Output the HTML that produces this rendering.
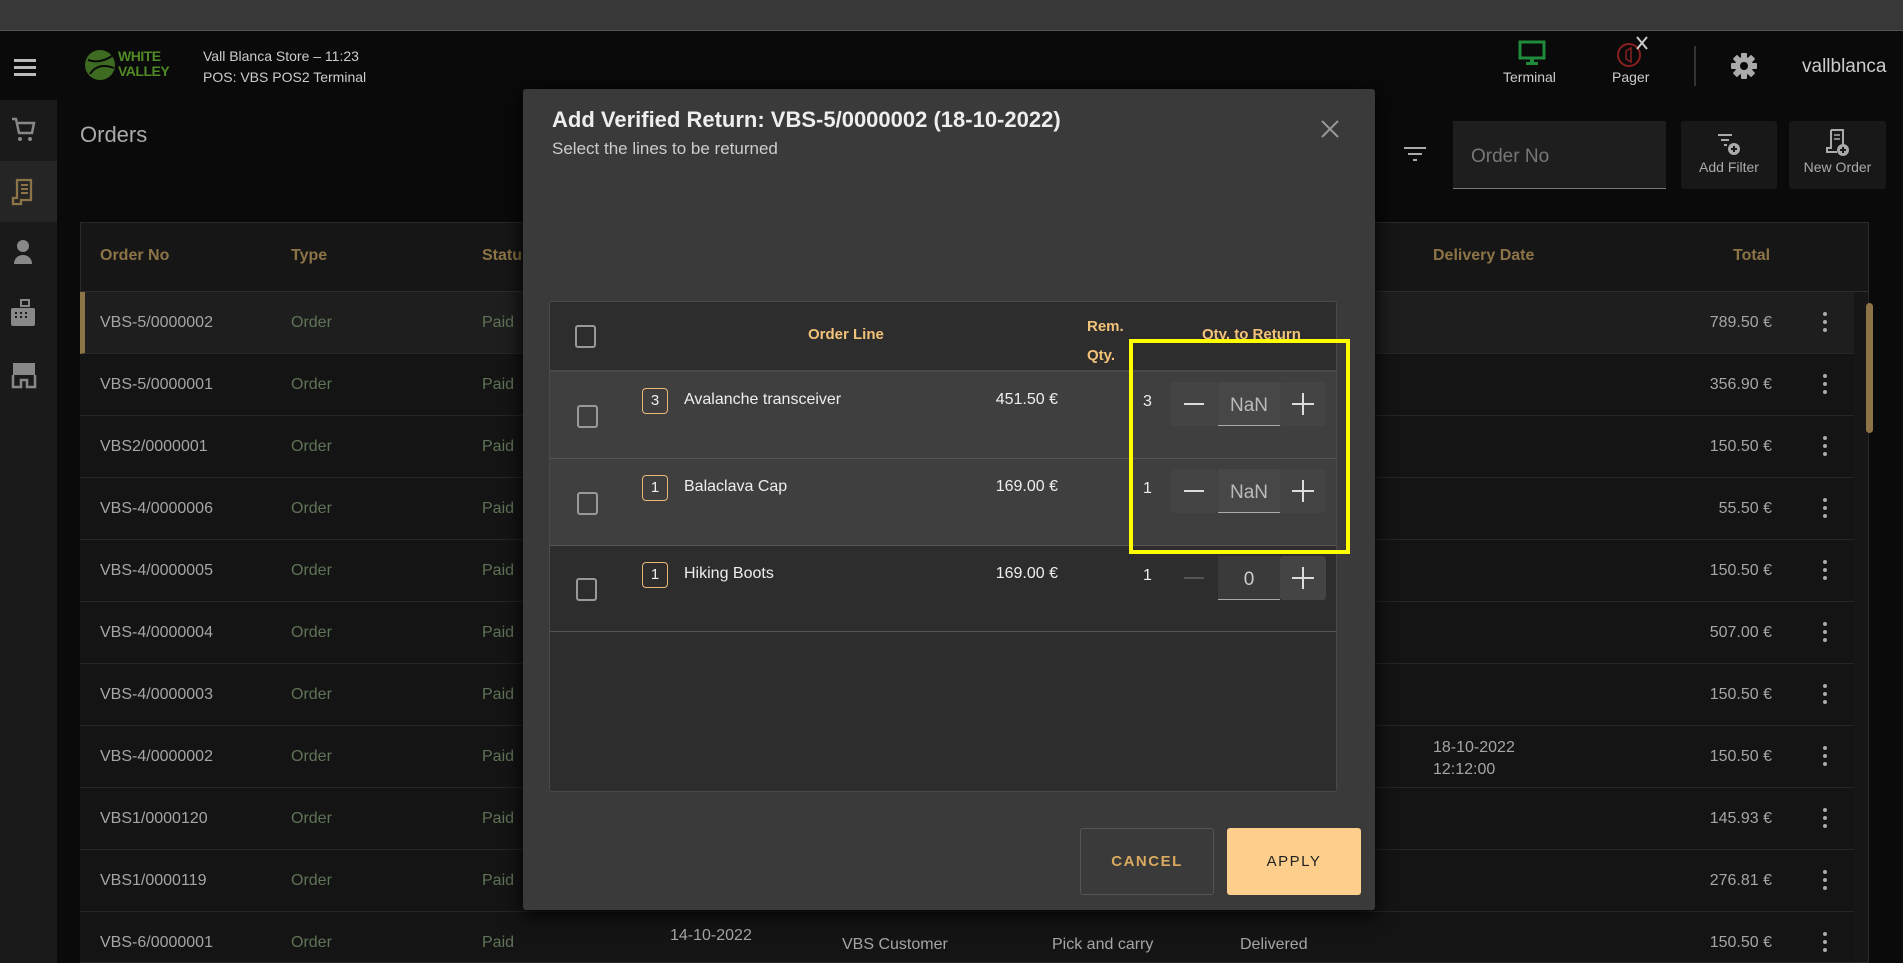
<!DOCTYPE html>
<html><head><meta charset="utf-8"><style>
*{box-sizing:border-box;margin:0;padding:0}
body{width:1903px;height:963px;overflow:hidden;background:#0a0a0a;font-family:"Liberation Sans",sans-serif;position:relative;color:#ccc}
.a{position:absolute}
.top{left:0;top:0;width:1903px;height:31px;background:#383838;border-bottom:1px solid #555}
.side{left:0;top:100px;width:57px;height:863px;background:#1a1a1a}
.hd{color:#8c7447;font-weight:bold;font-size:16px}
.row{left:80px;width:1774px;height:62px;border-bottom:1px solid #262626;background:#141414}
.c{position:absolute;top:22px;font-size:16px}
.no{left:20px;color:#a5a5a5}.ty{left:211px;color:#5f7357}.st{left:402px;color:#5f7357}
.tot{right:82px;color:#a5a5a5;text-align:right;width:120px}
.dots{left:1743px;top:20px;width:4px}
.dots i{display:block;width:4px;height:4px;border-radius:2px;background:#aaa;margin-bottom:4px}
.modal{left:523px;top:89px;width:852px;height:821px;background:#3a3a3a;border-radius:3px;box-shadow:0 4px 20px #000}
.cb{position:absolute;width:21px;height:23px;border:2px solid #999;border-radius:3px}
.mr{position:absolute;left:0;width:786px;border-bottom:1px solid #555}
.badge{position:absolute;left:92px;width:26px;height:26px;border:1.5px solid #e8b877;border-radius:4px;color:#eee;font-size:15px;text-align:center;line-height:23px}
.nm{position:absolute;left:134px;font-size:16px;color:#eee}
.pr{position:absolute;right:278px;font-size:16px;color:#eee}
.rq{position:absolute;left:593px;font-size:16px;color:#eee}
.bt{position:absolute;width:46px;height:44px;background:#444;border-radius:3px}
.inp{position:absolute;left:668px;width:62px;height:44px;background:#4a4a4a;border-bottom:1px solid #aaa;color:#bbb;font-size:19px;text-align:center;line-height:48px}
</style></head><body>
<div class="a top"></div>
<div class="a" style="left:14px;top:59px;width:22px">
<div style="height:3px;background:#bbb;margin-bottom:4px"></div><div style="height:3px;background:#bbb;margin-bottom:4px"></div><div style="height:3px;background:#bbb"></div></div>
<svg class="a" style="left:84px;top:48px" width="32" height="34" viewBox="0 0 32 34"><circle cx="16" cy="17" r="15" fill="#3d6b22"/><path d="M4 12 Q16 16 28 8 M6 26 Q14 14 30 20" stroke="#0a0a0a" stroke-width="2" fill="none"/></svg>
<div class="a" style="left:118px;top:49px;color:#4f8a26;font-weight:bold;font-size:14px;line-height:15px;letter-spacing:-0.5px">WHITE<br>VALLEY</div>
<div class="a" style="left:203px;top:46px;font-size:14px;color:#ccc;line-height:21px">Vall Blanca Store – 11:23<br>POS: VBS POS2 Terminal</div>
<svg class="a" style="left:1518px;top:40px" width="28" height="26" viewBox="0 0 28 26"><rect x="2" y="2" width="24" height="16" fill="none" stroke="#1e8a3a" stroke-width="3"/><rect x="12" y="18" width="4" height="4" fill="#1e8a3a"/><rect x="8" y="22" width="12" height="3" fill="#1e8a3a"/></svg>
<div class="a" style="left:1503px;top:69px;font-size:14px;color:#ccc">Terminal</div>
<svg class="a" style="left:1615px;top:35px" width="36" height="32" viewBox="0 0 36 32"><circle cx="14" cy="20" r="11" fill="none" stroke="#8a1f1f" stroke-width="2"/><path d="M11 16l5-3v14l-5-3z" fill="none" stroke="#8a1f1f" stroke-width="1.5"/><path d="M22 2l10 12M32 2L22 14" stroke="#ccc" stroke-width="2"/></svg>
<div class="a" style="left:1612px;top:69px;font-size:14px;color:#ccc">Pager</div>
<div class="a" style="left:1694px;top:46px;width:2px;height:40px;background:#333"></div>
<svg class="a" style="left:1731px;top:53px" width="26" height="26" viewBox="0 0 26 26"><g fill="#aaa"><rect x="10" y="0" width="6" height="26" rx="1"/><rect x="10" y="0" width="6" height="26" rx="1" transform="rotate(45 13 13)"/><rect x="10" y="0" width="6" height="26" rx="1" transform="rotate(90 13 13)"/><rect x="10" y="0" width="6" height="26" rx="1" transform="rotate(135 13 13)"/><circle cx="13" cy="13" r="9"/></g><circle cx="13" cy="13" r="4" fill="#0a0a0a"/></svg>
<div class="a" style="left:1802px;top:56px;font-size:19px;color:#ccc">vallblanca</div>
<div class="a side"></div>
<div class="a" style="left:0;top:161px;width:57px;height:61px;background:#252525"></div>
<svg class="a" style="left:10px;top:116px" width="26" height="28" viewBox="0 0 26 28"><path d="M2 3h4l3 14h13l2-10H8" fill="none" stroke="#888" stroke-width="2.5"/><circle cx="10" cy="23" r="2" fill="#888"/><circle cx="20" cy="23" r="2" fill="#888"/></svg>
<svg class="a" style="left:11px;top:178px" width="24" height="28" viewBox="0 0 24 28"><path d="M6 2h14v20H10v4H2v-6h4z" fill="none" stroke="#8c7447" stroke-width="2.3"/><path d="M10 7h7M10 11h7M10 15h7" stroke="#8c7447" stroke-width="2"/></svg>
<svg class="a" style="left:12px;top:238px" width="22" height="28" viewBox="0 0 22 28"><circle cx="11" cy="8" r="6" fill="#888"/><path d="M2 26c0-12 18-12 18 0z" fill="#888"/></svg>
<svg class="a" style="left:9px;top:298px" width="28" height="30" viewBox="0 0 28 30"><rect x="12" y="2" width="8" height="6" fill="none" stroke="#888" stroke-width="2"/><rect x="2" y="10" width="24" height="18" rx="2" fill="#888"/><path d="M6 15h2M11 15h2M16 15h2M6 19h2M11 19h2M16 19h2" stroke="#1a1a1a" stroke-width="2"/></svg>
<svg class="a" style="left:10px;top:361px" width="28" height="28" viewBox="0 0 28 28"><rect x="3" y="2" width="22" height="12" fill="#888"/><path d="M3 14v12h8v-7h6v7h8V14" fill="none" stroke="#888" stroke-width="2.5"/></svg>
<div class="a" style="left:80px;top:122px;font-size:22px;color:#aaa">Orders</div>
<div class="a" style="left:1404px;top:147px;width:22px"><div style="height:2px;background:#aaa;margin:0 0 4px"></div><div style="height:2px;background:#aaa;margin:0 4px 4px"></div><div style="height:2px;background:#aaa;margin:0 9px"></div></div>
<div class="a" style="left:1453px;top:121px;width:213px;height:68px;background:#1e1e1e;border-bottom:1px solid #777;color:#777;font-size:19px;padding:25px 18px">Order No</div>
<div class="a" style="left:1681px;top:121px;width:96px;height:68px;background:#181818;border-radius:3px;color:#aaa;font-size:14px;text-align:center;padding-top:38px">Add Filter</div>
<svg class="a" style="left:1716px;top:132px" width="26" height="26" viewBox="0 0 26 26"><path d="M2 3h14M5 8h8M8 13h3" stroke="#aaa" stroke-width="2"/><circle cx="18" cy="17" r="6" fill="#aaa"/><path d="M15 17h6M18 14v6" stroke="#181818" stroke-width="2"/></svg>
<div class="a" style="left:1789px;top:121px;width:97px;height:68px;background:#181818;border-radius:3px;color:#aaa;font-size:14px;text-align:center;padding-top:38px">New Order</div>
<svg class="a" style="left:1825px;top:128px" width="26" height="30" viewBox="0 0 26 30"><path d="M6 2h12v16M6 2v18H2v4h10" fill="none" stroke="#aaa" stroke-width="2"/><path d="M9 7h6M9 11h6" stroke="#aaa" stroke-width="1.5"/><circle cx="18" cy="22" r="6" fill="#aaa"/><path d="M15 22h6M18 19v6" stroke="#181818" stroke-width="2"/></svg>
<div class="a" style="left:80px;top:222px;width:1789px;height:741px;background:#161616;border:1px solid #2a2a2a"></div>
<div class="a hd" style="left:100px;top:247px">Order No</div>
<div class="a hd" style="left:291px;top:247px">Type</div>
<div class="a hd" style="left:482px;top:247px">Status</div>
<div class="a hd" style="left:1433px;top:247px">Delivery Date</div>
<div class="a hd" style="left:1733px;top:247px">Total</div>
<div class="a" style="left:80px;top:291px;width:1789px;height:1px;background:#2e2e2e"></div>
<div class="a row" style="top:292px;background:#1e1e1e;border-left:5px solid #8c7447"><span class="c no" style="left:15px">VBS-5/0000002</span><span class="c ty" style="left:206px">Order</span><span class="c st" style="left:397px">Paid</span><span class="c tot" style="right:82px">789.50 €</span><span class="c dots" style="left:1738px"><i></i><i></i><i></i></span></div>
<div class="a row" style="top:354px"><span class="c no">VBS-5/0000001</span><span class="c ty">Order</span><span class="c st">Paid</span><span class="c tot">356.90 €</span><span class="c dots"><i></i><i></i><i></i></span></div>
<div class="a row" style="top:416px"><span class="c no">VBS2/0000001</span><span class="c ty">Order</span><span class="c st">Paid</span><span class="c tot">150.50 €</span><span class="c dots"><i></i><i></i><i></i></span></div>
<div class="a row" style="top:478px"><span class="c no">VBS-4/0000006</span><span class="c ty">Order</span><span class="c st">Paid</span><span class="c tot">55.50 €</span><span class="c dots"><i></i><i></i><i></i></span></div>
<div class="a row" style="top:540px"><span class="c no">VBS-4/0000005</span><span class="c ty">Order</span><span class="c st">Paid</span><span class="c tot">150.50 €</span><span class="c dots"><i></i><i></i><i></i></span></div>
<div class="a row" style="top:602px"><span class="c no">VBS-4/0000004</span><span class="c ty">Order</span><span class="c st">Paid</span><span class="c tot">507.00 €</span><span class="c dots"><i></i><i></i><i></i></span></div>
<div class="a row" style="top:664px"><span class="c no">VBS-4/0000003</span><span class="c ty">Order</span><span class="c st">Paid</span><span class="c tot">150.50 €</span><span class="c dots"><i></i><i></i><i></i></span></div>
<div class="a row" style="top:726px"><span class="c no">VBS-4/0000002</span><span class="c ty">Order</span><span class="c st">Paid</span><span class="c" style="left:1353px;top:11px;color:#a5a5a5;line-height:22px">18-10-2022<br>12:12:00</span><span class="c tot">150.50 €</span><span class="c dots"><i></i><i></i><i></i></span></div>
<div class="a row" style="top:788px"><span class="c no">VBS1/0000120</span><span class="c ty">Order</span><span class="c st">Paid</span><span class="c tot">145.93 €</span><span class="c dots"><i></i><i></i><i></i></span></div>
<div class="a row" style="top:850px"><span class="c no">VBS1/0000119</span><span class="c ty">Order</span><span class="c st">Paid</span><span class="c tot">276.81 €</span><span class="c dots"><i></i><i></i><i></i></span></div>
<div class="a row" style="top:912px;height:51px"><span class="c no">VBS-6/0000001</span><span class="c ty">Order</span><span class="c st">Paid</span><span class="c" style="left:590px;top:15px;color:#a5a5a5">14-10-2022</span><span class="c" style="left:762px;top:24px;color:#a5a5a5">VBS Customer</span><span class="c" style="left:972px;top:24px;color:#a5a5a5">Pick and carry</span><span class="c" style="left:1160px;top:24px;color:#a5a5a5">Delivered</span><span class="c tot">150.50 €</span><span class="c dots"><i></i><i></i><i></i></span></div>
<div class="a" style="left:1866px;top:303px;width:7px;height:130px;border-radius:4px;background:#8c7447"></div>
<div class="a modal">
<div class="a" style="left:29px;top:18px;font-size:22px;font-weight:bold;color:#eee">Add Verified Return: VBS-5/0000002 (18-10-2022)</div>
<div class="a" style="left:29px;top:50px;font-size:17px;color:#ccc">Select the lines to be returned</div>
<svg class="a" style="left:798px;top:31px" width="18" height="18"><path d="M1 1L17 17M17 1L1 17" stroke="#999" stroke-width="2"/></svg>
<div class="a" style="left:26px;top:212px;width:788px;height:491px;background:#2d2d2d;border:1px solid #4a4a4a;border-radius:3px">
 <div class="mr" style="top:0;height:70px;border-bottom:2px solid #4a4a4a">
  <div class="cb" style="left:25px;top:23px"></div>
  <div class="a" style="left:258px;top:24px;font-size:15px;font-weight:bold;color:#f2c27a">Order Line</div>
  <div class="a" style="left:537px;top:10px;font-size:15px;font-weight:bold;color:#f2c27a;line-height:29px">Rem.<br>Qty.</div>
  <div class="a" style="left:652px;top:24px;font-size:15px;font-weight:bold;color:#f2c27a">Qty. to Return</div>
 </div>
 <div class="mr" style="top:70px;height:87px;background:#3f3f3f">
  <div class="cb" style="left:27px;top:33px"></div>
  <div class="badge" style="top:16px">3</div><div class="nm" style="top:19px">Avalanche transceiver</div><div class="pr" style="top:19px">451.50 €</div><div class="rq" style="top:21px">3</div>
  <div class="bt" style="left:621px;top:10px"><div class="a" style="left:13px;top:21px;width:20px;height:2px;background:#ddd"></div></div>
  <div class="inp" style="top:10px;background:#474747">NaN</div>
  <div class="bt" style="left:730px;top:10px"><div class="a" style="left:12px;top:21px;width:22px;height:2px;background:#ddd"></div><div class="a" style="left:22px;top:11px;width:2px;height:22px;background:#ddd"></div></div>
 </div>
 <div class="mr" style="top:157px;height:87px;background:#3f3f3f">
  <div class="cb" style="left:27px;top:33px"></div>
  <div class="badge" style="top:16px">1</div><div class="nm" style="top:19px">Balaclava Cap</div><div class="pr" style="top:19px">169.00 €</div><div class="rq" style="top:21px">1</div>
  <div class="bt" style="left:621px;top:10px"><div class="a" style="left:13px;top:21px;width:20px;height:2px;background:#ddd"></div></div>
  <div class="inp" style="top:10px;background:#474747">NaN</div>
  <div class="bt" style="left:730px;top:10px"><div class="a" style="left:12px;top:21px;width:22px;height:2px;background:#ddd"></div><div class="a" style="left:22px;top:11px;width:2px;height:22px;background:#ddd"></div></div>
 </div>
 <div class="mr" style="top:244px;height:86px">
  <div class="cb" style="left:26px;top:32px"></div>
  <div class="badge" style="top:16px">1</div><div class="nm" style="top:19px">Hiking Boots</div><div class="pr" style="top:19px">169.00 €</div><div class="rq" style="top:21px">1</div>
  <div class="a" style="left:634px;top:31px;width:20px;height:2px;background:#555"></div>
  <div class="inp" style="top:10px;background:#3a3a3a;color:#ccc">0</div>
  <div class="bt" style="left:730px;top:10px"><div class="a" style="left:12px;top:21px;width:22px;height:2px;background:#ddd"></div><div class="a" style="left:22px;top:11px;width:2px;height:22px;background:#ddd"></div></div>
 </div>
</div>
<div class="a" style="left:557px;top:739px;width:134px;height:67px;border:1px solid #555;border-radius:3px;color:#d9a95f;font-weight:bold;font-size:15px;letter-spacing:1.5px;text-align:center;line-height:65px">CANCEL</div>
<div class="a" style="left:704px;top:739px;width:134px;height:67px;background:#fecf8c;border-radius:3px;color:#222;font-size:15px;letter-spacing:1.5px;text-align:center;line-height:67px">APPLY</div>
</div>
<div class="a" style="left:1129px;top:339px;width:221px;height:215px;border:4px solid #ffff00"></div>
</body></html>
